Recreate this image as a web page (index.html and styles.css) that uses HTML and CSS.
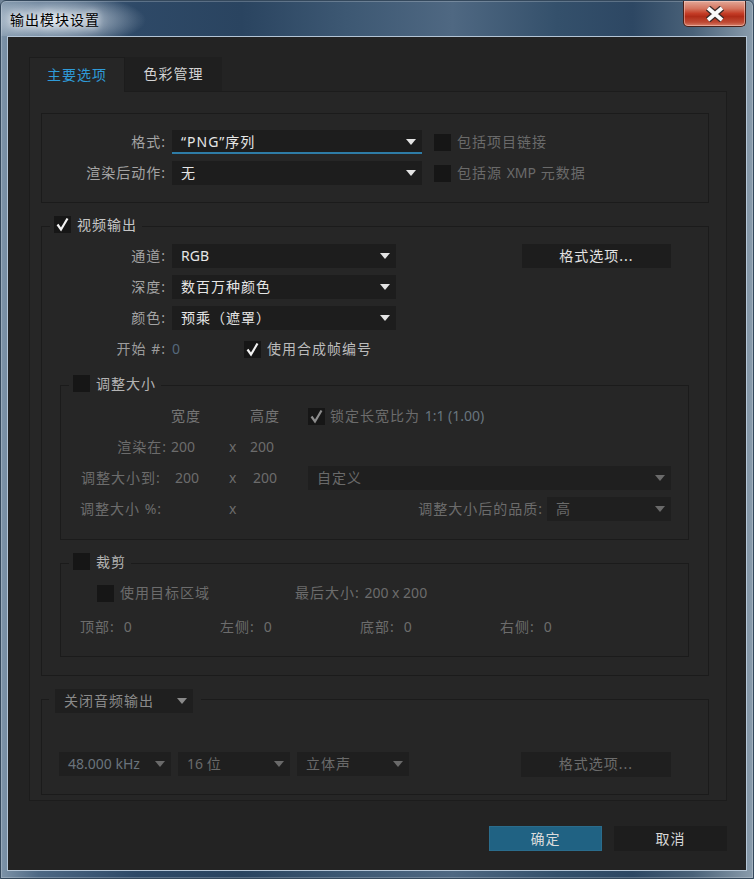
FILE: index.html
```html
<!DOCTYPE html>
<html lang="zh-CN">
<head>
<meta charset="utf-8">
<title>输出模块设置</title>
<link rel="stylesheet" href="styles.css">
</head>
<body>
<div class="window">
  <header class="titlebar">
    <span class="title">输出模块设置</span>
    <div class="close">
      <svg width="22" height="16" viewBox="0 0 22 16"><path d="M4 2 L18 14 M18 2 L4 14" fill="none" stroke="#3a2a28" stroke-width="6.4"/><path d="M4 2 L18 14 M18 2 L4 14" fill="none" stroke="#fafafa" stroke-width="3.8"/></svg>
    </div>
  </header>
  <div class="client">
    <div class="tabs">
      <div class="tab active">主要选项</div>
      <div class="tab other">色彩管理</div>
    </div>
    <div class="panel">
      <div class="box main-box">
        <div class="row">
          <span class="lbl w124">格式:</span>
          <div class="dd w250 focus"><span class="val">“PNG”序列</span><span class="arr"></span></div>
          <span class="cb ml12"></span><span class="dis ml6 t">包括项目链接</span>
        </div>
        <div class="row">
          <span class="lbl w124">渲染后动作:</span>
          <div class="dd w250"><span class="val">无</span><span class="arr"></span></div>
          <span class="cb ml12"></span><span class="dis ml6 t">包括源 <span class="n">XMP</span> 元数据</span>
        </div>
      </div>

      <fieldset class="fs video">
        <legend><span class="cb"><svg viewBox="0 0 17 17" width="17" height="17"><path d="M3.5 8.5 L7 13.5 L13.5 2.5" fill="none" stroke="#f2f2f2" stroke-width="2.2"/></svg></span><span class="lg">视频输出</span></legend>
        <div class="vrows">
          <div class="row">
            <span class="lbl w124">通道:</span>
            <div class="dd w224"><span class="val n">RGB</span><span class="arr"></span></div>
            <div class="btn fmt">格式选项...</div>
          </div>
          <div class="row">
            <span class="lbl w124">深度:</span>
            <div class="dd w224"><span class="val">数百万种颜色</span><span class="arr"></span></div>
          </div>
          <div class="row">
            <span class="lbl w124">颜色:</span>
            <div class="dd w224"><span class="val">预乘（遮罩）</span><span class="arr"></span></div>
          </div>
          <div class="row">
            <span class="lbl w124 start-lbl">开始 #:</span>
            <span class="hot n start-val t">0</span>
            <span class="cb"><svg viewBox="0 0 17 17" width="17" height="17"><path d="M3.5 8.5 L7 13.5 L13.5 2.5" fill="none" stroke="#f2f2f2" stroke-width="2.2"/></svg></span>
            <span class="ml6 light t">使用合成帧编号</span>
          </div>
        </div>

        <fieldset class="fs sub resize">
          <legend><span class="cb"></span><span class="lg">调整大小</span></legend>
          <div class="rrows">
            <div class="row">
              <span class="c-lbl"></span><span class="c-v1 head t">宽度</span><span class="c-x"></span><span class="c-v2 head t">高度</span>
              <span class="cb"><svg viewBox="0 0 17 17" width="17" height="17"><path d="M3.5 8.5 L7 13.5 L13.5 2.5" fill="none" stroke="#8c8c8c" stroke-width="2.2"/></svg></span>
              <span class="ml5 t">锁定长宽比为 <span class="n hotdim">1:1 (1.00)</span></span>
            </div>
            <div class="row">
              <span class="c-lbl t">渲染在:</span><span class="c-v1 n t">200</span><span class="c-x n t">x</span><span class="c-v2 n t">200</span>
            </div>
            <div class="row">
              <span class="c-lbl wide t">调整大小到:</span><span class="c-v1 n t">200</span><span class="c-x n t">x</span><span class="c-v2 n t shift">200</span>
              <div class="dd dis w363"><span class="val">自定义</span><span class="arr"></span></div>
            </div>
            <div class="row qrow">
              <span class="c-lbl left t">调整大小 %:</span><span class="c-v1"></span><span class="c-x n t">x</span><span class="c-v2"></span>
              <span class="qlbl t">调整大小后的品质:</span>
              <div class="dd dis w124"><span class="val">高</span><span class="arr"></span></div>
            </div>
          </div>
        </fieldset>

        <fieldset class="fs sub crop">
          <legend><span class="cb"></span><span class="lg">裁剪</span></legend>
          <div class="row crop1">
            <span class="cell1"><span class="cb"></span><span class="ml6 t">使用目标区域</span></span>
            <span class="t">最后大小: <span class="n">200 x 200</span></span>
          </div>
          <div class="row crop2">
            <span class="cell t">顶部:<span class="n v">0</span></span>
            <span class="cell t">左侧:<span class="n v">0</span></span>
            <span class="cell t">底部:<span class="n v">0</span></span>
            <span class="cell t">右侧:<span class="n v">0</span></span>
          </div>
        </fieldset>
      </fieldset>

      <fieldset class="fs audio">
        <legend><div class="dd dis2 w138"><span class="val">关闭音频输出</span><span class="arr"></span></div></legend>
        <div class="row arow">
          <div class="dd dis w112"><span class="val n blu">48.000 kHz</span><span class="arr"></span></div>
          <div class="dd dis w112"><span class="val n">16 位</span><span class="arr"></span></div>
          <div class="dd dis w112"><span class="val">立体声</span><span class="arr"></span></div>
          <div class="btn afmt">格式选项...</div>
        </div>
      </fieldset>
    </div>
    <div class="actions">
      <div class="btn ok">确定</div>
      <div class="btn cancel">取消</div>
    </div>
  </div>
</div>
</body>
</html>
```

FILE: styles.css
```css
* { box-sizing: border-box; margin: 0; padding: 0; }
html, body { width: 754px; height: 879px; overflow: hidden; }
body {
  background: #6e8296;
  font-family: "Noto Sans", "Noto Sans CJK SC", sans-serif;
  font-size: 14px;
  letter-spacing: 1px;
  color: #a6a6a6;
}
.n { letter-spacing: 0; }
.t { padding-bottom: 2px; }

.window {
  width: 754px;
  height: 879px;
  display: flex;
  flex-direction: column;
  border: 1px solid #34485c;
  border-radius: 6px 6px 0 0;
  background: linear-gradient(90deg, #7d93a8 0%, #4d6884 5%, #2e4967 18%, #2a4460 32%, #3d5873 46%, #4f6882 60%, #34506b 74%, #2d4763 84%, #4a6279 92%, #8a9cac 100%);
  box-shadow: inset 0 0 0 1px rgba(255,255,255,0.22);
}
.titlebar {
  height: 35px;
  display: flex;
  align-items: flex-start;
  background: radial-gradient(ellipse 90px 26px at 55px 19px, rgba(228,236,244,0.92), rgba(228,236,244,0) 100%);
}
.title {
  margin: 8px 0 0 9px;
  line-height: 20px;
  color: #000;
  font-family: "Noto Sans CJK SC", sans-serif;
  text-shadow: 0 0 6px rgba(255,255,255,0.9), 0 0 12px rgba(255,255,255,0.7);
}
.close {
  margin-left: auto;
  margin-right: 7px;
  width: 63px;
  height: 26px;
  display: flex;
  align-items: center;
  justify-content: center;
  border: 1px solid #4a2018;
  border-top: none;
  border-radius: 0 0 5px 5px;
  background: linear-gradient(180deg, #e2a898 0%, #d47560 30%, #c43c26 50%, #b02c18 62%, #bf4a34 85%, #d8806a 100%);
  box-shadow: inset 0 0 0 1px rgba(255,220,210,0.45);
}

.client {
  margin: 0 6px 7px 6px;
  height: 835px;
  border: 1px solid #b4c5d6;
  background: #232323;
  padding: 20px 19px 0 21px;
}
.tabs { display: flex; height: 34px; }
.tab {
  height: 34px;
  display: flex;
  align-items: center;
  justify-content: center;
  padding-bottom: 2px;
  color: #d4d4d4;
  font-family: "Noto Sans CJK SC", sans-serif;
  background: #1f1f1f;
}
.tab.active {
  width: 96px;
  height: 35px;
  padding-bottom: 3px;
  background: #262626;
  color: #2f9bd8;
  border: 1px solid #1c1c1c;
  border-bottom: none;
  position: relative;
  z-index: 1;
}
.tab.other { width: 97px; }
.panel {
  width: 698px;
  height: 710px;
  background: #262626;
  border: 1px solid #1c1c1c;
}

.row { display: flex; align-items: center; height: 24px; }
.lbl { text-align: right; color: #a4a4a4; margin-right: 6px; white-space: nowrap; padding-bottom: 2px; }
.w124 { width: 124px; flex: none; }
.ml12 { margin-left: 12px; }
.ml6 { margin-left: 6px; }
.ml5 { margin-left: 5px; }
.dis { color: #6a6a6a; }
.light { color: #bcbcbc; }
.hot { color: #55697c; }
.hotdim { color: #68757f; }

.box {
  border: 1px solid #1b1b1b;
}
.main-box {
  margin: 21px 0 0 11px;
  width: 668px;
  height: 90px;
  padding-top: 16px;
  display: flex;
  flex-direction: column;
  gap: 7px;
}

.dd {
  flex: none;
  height: 24px;
  display: flex;
  align-items: center;
  justify-content: space-between;
  padding: 0 6px 2px 9px;
  background: #1d1d1d;
  color: #e6e6e6;
  white-space: nowrap;
}
.dd .arr { margin-top: 2px; }
.dd.focus { box-shadow: inset 0 -2px 0 #2e7ca6; }
.arr {
  width: 0;
  height: 0;
  border-left: 5.5px solid transparent;
  border-right: 5.5px solid transparent;
  border-top: 6px solid #e4e4e4;
}
.dd.dis { background: #1f1f1f; color: #6a6a6a; }
.dd.dis .arr { border-top-color: #6a6a6a; }
.dd.dis2 { background: #1f1f1f; color: #8a8a8a; }
.dd.dis2 .arr { border-top-color: #8a8a8a; }
.w250 { width: 250px; }
.w224 { width: 224px; }
.w363 { width: 363px; }
.w138 { width: 138px; }
.w112 { width: 112px; }

.cb {
  flex: none;
  width: 17px;
  height: 17px;
  background: #161616;
  display: block;
}
.cb svg { display: block; }

.fs {
  border: 1px solid #1b1b1b;
  padding: 0;
  min-width: 0;
}
.fs legend {
  display: flex;
  align-items: flex-start;
  height: 20px;
  padding: 0 5px 0 4px;
  margin-left: 8px;
}
.lg { margin-left: 6px; line-height: 17px; color: #c6c6c6; }

.video {
  margin: 13px 0 0 11px;
  width: 668px;
  padding-bottom: 18px;
}
.vrows {
  margin-top: 8px;
  display: flex;
  flex-direction: column;
  gap: 7px;
}
.start-lbl { color: #9c9c9c; }
.start-val { width: 72px; flex: none; }
.btn {
  flex: none;
  display: flex;
  align-items: center;
  justify-content: center;
  padding-bottom: 2px;
  background: #1d1d1d;
  color: #e2e2e2;
  white-space: nowrap;
}
.fmt { width: 149px; height: 24px; margin-left: 126px; }

.sub {
  margin-left: 18px;
  width: 629px;
  color: #6c6c6c;
}
.resize { margin-top: 14px; padding-bottom: 18px; }
.sub .lg { color: #b4b4b4; }
.rrows {
  margin-top: 9px;
  display: flex;
  flex-direction: column;
  gap: 7px;
}
.c-lbl { width: 106px; flex: none; text-align: right; white-space: nowrap; }
.c-lbl.left { text-align: left; padding-left: 19px; }
.c-lbl.wide { width: 110px; text-align: left; padding-left: 20px; }
.c-v1 { width: 58px; flex: none; margin-left: 4px; }
.c-lbl.wide + .c-v1 { width: 54px; }
.c-x { width: 21px; flex: none; }
.c-v2 { width: 58px; flex: none; }
.c-v2.shift { padding-left: 3px; }
.head { color: #767676; }
.qrow { padding-right: 17px; }
.qlbl { flex: 1; text-align: right; margin-right: 4px; white-space: nowrap; }

.crop { margin-top: 13px; padding-bottom: 17px; }
.crop1 { margin-top: 8px; padding-left: 36px; }
.cell1 { width: 198px; flex: none; display: flex; align-items: center; }
.crop2 { margin-top: 10px; padding-left: 19px; }
.cell { width: 140px; flex: none; white-space: nowrap; }
.cell .v { margin-left: 9px; }

.audio {
  margin: 13px 0 0 11px;
  width: 668px;
  padding-bottom: 18px;
}
.audio legend {
  display: block;
  height: 20px;
  padding: 0 8px 0 6px;
  margin-left: 7px;
}
.arow {
  margin-top: 43px;
  padding-left: 17px;
  gap: 7px;
}
.blu { color: #6a737c; }
.afmt {
  width: 150px;
  height: 25px;
  margin-left: 105px;
  background: #1f1f1f;
  color: #6c6c6c;
}

.actions {
  width: 698px;
  margin-top: 25px;
  display: flex;
  justify-content: flex-end;
  gap: 12px;
}
.btn.ok, .btn.cancel { width: 113px; height: 25px; }
.btn.ok { background: #206283; border: 1px solid #2a6c8c; color: #dcdcdc; }
.btn.cancel { background: #1d1d1d; color: #d8d8d8; }
```
